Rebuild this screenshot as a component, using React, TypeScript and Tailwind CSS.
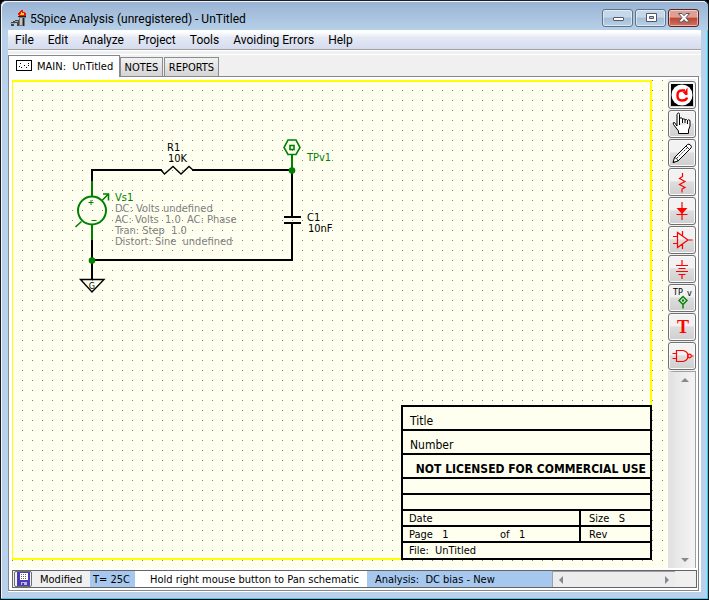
import React from "react";

const tahoma = "font-['DejaVu_Sans_Condensed','DejaVu_Sans',sans-serif]";
const segoe = "font-['Roboto',sans-serif]";

const menus = ["File", "Edit", "Analyze", "Project", "Tools", "Avoiding Errors", "Help"];

function AppIcon() {
  return (
    <svg width="17" height="16" viewBox="0 0 17 16" shapeRendering="crispEdges" aria-hidden="true">
      <path d="M1 12h2v-1h2v-1h4v6H7v-3H4v3H1z" fill="#444" />
      <path d="M0 13h5v1H0zM5 11h3v1H5z" fill="#aaa" />
      <path d="M9 6h7v2h-1v8H9z" fill="#777" />
      <path d="M10 8h2v7h-2z" fill="#c4c4c4" />
      <path d="M13 8h1v8h-1z" fill="#222" />
      <path d="M8 6h8v1H8z" fill="#222" />
      <path d="M8 3h1V2h1V1h1V0h2v2h2v1h1v3H9V5H8z" fill="#f01010" />
      <path d="M11 2h1v1h2v2h-4V4h1z" fill="#ffe000" />
    </svg>
  );
}

function CaptionButton({ label, close = false, children }: { label: string; close?: boolean; children: React.ReactNode }) {
  return (
    <button
      aria-label={label}
      className={`flex h-[18px] w-[31px] items-center justify-center rounded-[3px] border shadow-[inset_0_0_0_1px_rgba(255,255,255,0.5)] ${
        close
          ? "border-[#5b2328] bg-linear-to-b from-[#dfa093] from-45% via-[#bd4531] via-50% to-[#cf7360]"
          : "border-[#5f7387] bg-linear-to-b from-[#c5d7ea] from-45% via-[#a5bdd6] via-50% to-[#b8d0e8]"
      }`}
    >
      <svg width="14" height="12" viewBox="0 0 14 12" aria-hidden="true">
        {children}
      </svg>
    </button>
  );
}

const red = { fill: "none", stroke: "#ff0000", strokeWidth: 1.2 };

const tools: { name: string; icon: React.ReactNode }[] = [
  {
    name: "Repeat",
    icon: (
      <>
        <rect x="1" y="1" width="22" height="22" fill="#000" />
        <circle cx="12" cy="12" r="10.500" fill="#fff" />
        <path d="M15 7.500H12Q7.500 7.500 7.500 12v1q0 4.500 4.500 4.500t5-3" fill="none" stroke="#f00" strokeWidth="2.4" />
        <path d="M17.500 4.500v7.500h-2l-3-3h2z" fill="#f00" />
      </>
    ),
  },
  {
    name: "Pan",
    icon: (
      <path
        d="M8.5 14V3.500Q8.500 2 7.500 2T6 3.500V15L3.500 11.500Q1.500 11 2.500 13.500L7.500 20v2.500h10V19l1.500-4V9.500Q17.500 8 16.500 9.500V13M8.500 12V7.500Q10 6 11.500 7.500V12M11.500 8.500Q13 7 14 8.500V12M14 9Q15.500 7.500 16.500 9.500"
        transform="translate(1 -1)"
        fill="#fff"
        stroke="#000"
      />
    ),
  },
  {
    name: "Draw wire",
    icon: (
      <>
        <path d="M3 21.500l1.500-5L17.500 3.500q1.500-1 3 .5t.5 3L8 20z" fill="#fff" stroke="#000" />
        <path d="M4.500 16.500q3 .5 3.500 3.500M16 5l3.500 3.500" fill="none" stroke="#000" strokeWidth="0.8" />
        <path d="M7 17L18 6" fill="none" stroke="#000" strokeWidth="0.8" strokeDasharray="1.5 1" />
        <path d="M3 22v-2.500l2 2z" fill="#000" />
      </>
    ),
  },
  { name: "Resistor", icon: <path d="M12.500 3v3.500l-3 2 5.500 3-5.500 3 5.500 3-3 1.500v3.500" {...red} /> },
  {
    name: "Diode",
    icon: (
      <>
        <path d="M12 3v18M6.500 15.500h11" {...red} />
        <path d="M6.500 9h11l-5.500 6z" fill="#f00" />
      </>
    ),
  },
  { name: "Amplifier", icon: <path d="M7.500 4.500v15L18 12zM3 8.500h4.500M3 15.500h4.500M18 12h4.500M12.500 3v4.500M12.500 16.500v4.500" {...red} /> },
  { name: "Source", icon: <path d="M12 3v5.500M6 8.500h12M8.500 11.500h7M6 14.500h12M8.500 17.500h7M12 17.500V22" {...red} /> },
  {
    name: "Test point",
    icon: (
      <>
        <text x="3" y="9" fontSize="9" fill="#000">TP</text>
        <text x="17" y="10" fontSize="9" fill="#000">v</text>
        <path d="M13 10.500L17 14.500l-4 4-4-4zM13 18.500v4" fill="none" stroke="#008000" strokeWidth="1.4" />
        <rect x="12" y="13.500" width="2" height="2" fill="#008000" />
      </>
    ),
  },
  {
    name: "Text",
    icon: (
      <text x="13" y="18" textAnchor="middle" fontSize="18" fontWeight="bold" fill="#f00" className="font-['Liberation_Serif',serif]">
        T
      </text>
    ),
  },
  {
    name: "Logic gate",
    icon: (
      <>
        <path d="M6.500 6.500h6.500q5 1 5 5.500t-5 5.500H6.500zM2.500 9.500h4M2.500 14.500h4M21.500 12h2" {...red} />
        <circle cx="19.500" cy="12" r="1.800" {...red} />
      </>
    ),
  },
];

function Schematic() {
  return (
    <svg width="100%" height="100%" className="block" role="img" aria-label="Schematic">
      <defs>
        <pattern id="grid" width="10" height="10" patternUnits="userSpaceOnUse">
          <rect x="0" y="1" width="1" height="1" fill="#808078" />
        </pattern>
      </defs>
      <rect width="100%" height="482" fill="url(#grid)" />
      <g transform="translate(-12 -79)" fontSize="11">
        <rect x="12" y="81" width="639" height="478" fill="none" stroke="#ffff00" strokeWidth="2" />
        <g fill="none" stroke="#000" strokeWidth="2">
          <path d="M92 182V170H162M192 170H292V217M292 223V260H92M92 240V280M284 217H301M284 223H301" />
          <path d="M161 170l3.500 4 8.500-7.500 8 7.500 8-7.500 4 3.500" strokeWidth="1.4" />
          <path d="M80.500 279.500h23.500L92 292z" strokeWidth="1.4" />
        </g>
        <g fill="none" stroke="#008000" strokeWidth="2">
          <path d="M92 181v15M92 225v15M292 155v15" />
          <circle cx="92" cy="210.500" r="14" />
          <path d="M75.500 227l6-5.500M102.500 200l6-6M103 194h5.500v6.500" strokeWidth="1.6" />
          <path d="M88.500 202.500h5M91 200v5M91.500 220.500h5" strokeWidth="1" />
          <path d="M288 140h8l4 7.500-4 7h-8l-4-7z" strokeWidth="1.6" />
          <rect x="290" y="145.500" width="4" height="4" strokeWidth="1.6" />
        </g>
        <circle cx="92" cy="260.500" r="3.300" fill="#008000" />
        <circle cx="292" cy="170.500" r="3.300" fill="#008000" />
        <g fill="#000">
          <text x="167" y="151">R1</text>
          <text x="168" y="162">10K</text>
          <text x="307" y="221">C1</text>
          <text x="308" y="232">10nF</text>
          <text x="92" y="289" fontSize="9" textAnchor="middle">G</text>
        </g>
        <g fill="#008000">
          <text x="307" y="161">TPv1</text>
          <text x="115" y="201">Vs1</text>
        </g>
        <g fill="#808080">
          <text x="115" y="212">DC: Volts undefined</text>
          <text x="115" y="223">{"AC: Volts\u00a0 1.0\u00a0 AC: Phase"}</text>
          <text x="115" y="234">{"Tran: Step\u00a0 1.0"}</text>
          <text x="115" y="245">{"Distort: Sine\u00a0 undefined"}</text>
        </g>
      </g>
    </svg>
  );
}

function TitleBlock() {
  return (
    <div className="absolute top-[326px] left-[389px] w-[251px] divide-y-2 divide-black border-2 border-black bg-[#fffff0] text-[11px] leading-4 whitespace-pre">
      <div className="h-6 px-[7px] pt-1.5 text-[12px]">Title</div>
      <div className="h-6 px-[7px] pt-1.5 text-[12px]">Number</div>
      <div className="h-6 pt-1.5 pr-1 text-right text-[12px] font-bold">NOT LICENSED FOR COMMERCIAL USE</div>
      <div className="h-4" />
      <div className="h-4" />
      <div className="flex h-4">
        <div className="flex-1 pl-1.5">Date</div>
        <div className="w-[71px] border-l-2 border-black pl-2">{"Size   S"}</div>
      </div>
      <div className="flex h-4">
        <div className="flex flex-1 pl-1.5">
          <span className="w-[91px]">{"Page   1"}</span>
          <span>{"of   1"}</span>
        </div>
        <div className="w-[71px] border-l-2 border-black pl-2">Rev</div>
      </div>
      <div className="h-[15px] pl-1.5">{"File:  UnTitled"}</div>
    </div>
  );
}

function Arrow({ d }: { d: string }) {
  return (
    <svg width="8" height="8" viewBox="0 0 8 8" aria-hidden="true">
      <path d={d} fill="#85888c" />
    </svg>
  );
}

export default function App() {
  return (
    <div className={`h-screen min-h-[600px] bg-black text-[11px] text-black ${tahoma}`}>
      <div className="flex h-full flex-col rounded-t-md border border-[#1c1c24] border-b-black bg-[#b9d1ea] shadow-[inset_-1px_-1px_0_#2fd3ee,inset_1px_1px_0_#eef5fc]">
        <header className="flex h-[29px] shrink-0 items-center rounded-t-md bg-linear-to-b from-[#98b3d2] to-[#b7d0e9] pt-1 pr-[9px] pl-[9px] shadow-[inset_1px_1px_0_#eef5fc]">
          <AppIcon />
          <h1 className={`ml-[3px] flex-1 pt-0.5 text-[12px] leading-4 font-normal ${segoe}`}>5Spice Analysis (unregistered) - UnTitled</h1>
          <div className="flex gap-0.5">
            <CaptionButton label="Minimize">
              <rect x="2.5" y="5.5" width="10" height="3" rx="0.5" fill="#fff" stroke="#535666" />
            </CaptionButton>
            <CaptionButton label="Maximize">
              <path d="M2.5 1.5h10v8h-10zM5.500 4.500h4v2h-4z" fill="#fff" fillRule="evenodd" stroke="#535666" />
            </CaptionButton>
            <CaptionButton label="Close" close>
              <path d="M1.500 1.500h3.500L7 3.700l2-2.200h3.500L9 5.700l3.500 4.300H9L7 7.700 5 10H1.500L5 5.700z" fill="#fff" stroke="#535666" />
            </CaptionButton>
          </div>
        </header>

        <div className="mx-[7px] mb-[7px] flex min-h-0 flex-1 flex-col bg-[#f0f0f0]">
          <nav className={`flex h-[19px] shrink-0 items-center gap-[14px] bg-linear-to-b from-white from-10% via-[#e4e9f4] via-40% to-[#d5dcee] pt-px pl-[7px] text-[12px] leading-4 ${segoe}`}>
            {menus.map((m) => (
              <button key={m} className="whitespace-nowrap">
                {m}
              </button>
            ))}
          </nav>
          <div className="h-[6px] shrink-0 border-t border-b border-t-[#a0a0a0] border-b-white shadow-[inset_0_1px_0_#ffffff]" />

          <div className="mr-0.5 flex h-[22px] shrink-0 items-end border-b border-l border-[#828790]" role="tablist">
            <button
              role="tab"
              aria-selected="true"
              className="-mb-px flex h-[22px] w-[111px] items-center border-t border-r border-[#828790] bg-white pl-[7px] whitespace-pre"
            >
              <svg width="16" height="11" viewBox="0 0 16 11" className="mb-0.5" shapeRendering="crispEdges" aria-hidden="true">
                <path d="M.5.5h15v10H.5z" fill="#fff" stroke="#000" />
                <path d="M4 3h1v1H4zM8 5h1v1H8zM12 3h1v1h-1zM5 7h1v1H5zM10 7h1v1h-1zM12 5h1v1h-1zM3 6h1v1H3z" fill="#000" />
              </svg>
              <span className="ml-[5px] pt-px">{"MAIN:  UnTitled"}</span>
            </button>
            <button role="tab" className="h-[19px] w-[43px] border border-b-0 border-[#898c95] bg-linear-to-b from-[#f2f2f2] to-[#d4d4d4] pt-0.5">
              NOTES
            </button>
            <button role="tab" className="ml-px h-[19px] w-[55px] border border-b-0 border-[#898c95] bg-linear-to-b from-[#f2f2f2] to-[#d4d4d4] pt-0.5">
              REPORTS
            </button>
          </div>

          <div className="flex min-h-0 flex-1 flex-col border-r-2 border-b border-white bg-white">
            <div className="flex min-h-0 flex-1 flex-col border-r border-b border-l border-[#828790] pt-0.5 pb-0.5 pl-[3px]">
              <div className="flex min-h-0 flex-1">
                <main className="relative min-w-0 flex-1 overflow-hidden bg-[#fffff0]">
                  <Schematic />
                  <TitleBlock />
                </main>
                <aside className="mr-0.5 flex w-7 shrink-0 flex-col bg-[#f0f0f0]">
                  <div className="flex flex-col gap-px pt-0.5">
                    {tools.map((t) => (
                      <button
                        key={t.name}
                        aria-label={t.name}
                        className="flex h-7 w-7 items-center justify-center rounded-[3px] border border-[#707070] bg-linear-to-b from-[#f2f2f2] from-45% via-[#dddddd] via-50% to-[#cfcfcf] shadow-[inset_0_0_0_1px_#fafafa]"
                      >
                        <svg width="24" height="24" viewBox="0 0 24 24" aria-hidden="true">
                          {t.icon}
                        </svg>
                      </button>
                    ))}
                  </div>
                  <div className="mt-px flex flex-1 flex-col items-center justify-between border-t border-r border-l-[6px] border-t-[#a0a0a0] border-r-[#a0a0a0] border-l-[#e3e3e3] bg-linear-to-r from-[#e6e6e6] to-[#f4f4f4] py-1">
                    <Arrow d="M0 6L4 2l4 4z" />
                    <Arrow d="M0 2h8L4 6z" />
                  </div>
                </aside>
              </div>

              <footer className="mt-0.5 mr-px flex h-[18px] shrink-0 border border-[#646464] bg-[#f0f0f0] text-[11px] leading-[18px] whitespace-nowrap">
                <button aria-label="Save" className="ml-px flex w-[18px] items-center justify-center rounded-[2px] border border-[#707070]">
                  <svg width="14" height="14" viewBox="0 0 13 14" shapeRendering="crispEdges" aria-hidden="true">
                    <rect width="13" height="14" fill="#4a3cb4" />
                    <rect x="3" y="1" width="8" height="7" fill="#fff" />
                    <path d="M4 2h1v1H4zM6 2h1v1H6zM8 2h1v1H8zM4 4h1v1H4zM6 4h1v1H6zM8 4h1v1H8zM4 6h1v1H4zM6 6h1v1H6zM8 6h1v1H8z" fill="#666" />
                    <path d="M4 10h6v3H4z" fill="#b9b9dc" />
                    <path d="M5 11h2v2H5z" fill="#4a3cb4" />
                  </svg>
                </button>
                <span className="w-[58px] pl-2">Modified</span>
                <span className="w-[45px] bg-[#a6c8ef] pl-[3px]">T= 25C</span>
                <span className="w-[232px] bg-white pl-[15px]">Hold right mouse button to Pan schematic</span>
                <span className="min-w-0 flex-1 bg-[#a6c8ef] pl-2 whitespace-pre">{"Analysis:  DC bias - New"}</span>
                <span className="flex w-[123px] items-center justify-between border-t border-l border-[#a0a0a0] bg-[#ececec] px-1">
                  <Arrow d="M6 0v8L2 4z" />
                  <Arrow d="M2 0l4 4-4 4z" />
                </span>
                <span className="w-[21px]" />
              </footer>
            </div>
          </div>
        </div>
      </div>
    </div>
  );
}
